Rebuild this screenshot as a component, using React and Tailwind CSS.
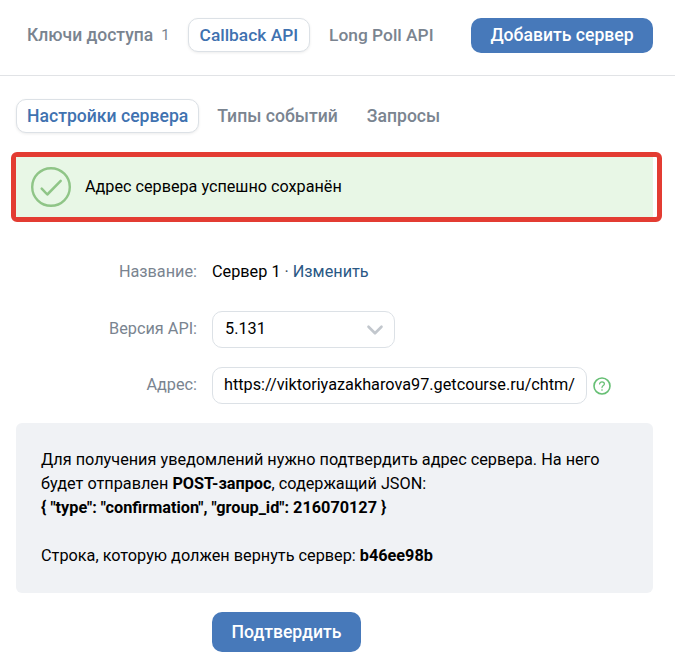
import { ChevronDown } from "lucide-react";

const CheckCircle = () => (
  <svg width="40" height="40" viewBox="0 0 40 40" fill="none" className="shrink-0">
    <circle cx="20" cy="20" r="18.8" stroke="#8fc587" strokeWidth="2.4" />
    <path d="M10.7 21.7 L16.3 27.5 L29.7 13.9" stroke="#8fc587" strokeWidth="2.5" strokeLinecap="round" strokeLinejoin="round" />
  </svg>
);

const HelpIcon = () => (
  <svg width="18" height="18" viewBox="0 0 18 18" fill="none" className="shrink-0">
    <circle cx="9" cy="9" r="8" stroke="#66bf74" strokeWidth="1.6" />
    <path d="M6.6 7 C6.6 5.6 7.7 4.8 9 4.8 C10.3 4.8 11.4 5.6 11.4 6.9 C11.4 8.5 9 8.6 9 10.6" stroke="#66bf74" strokeWidth="1.2" strokeLinecap="round" />
    <circle cx="9" cy="13" r="0.8" fill="#66bf74" />
  </svg>
);

const Label = ({ children }) => (
  <div className="w-[197px] mr-[15px] shrink-0 text-right text-[#7a8490]">{children}</div>
);

export default function App() {
  return (
    <div className="w-[675px] h-[671px] overflow-hidden bg-white text-[16.25px] text-black font-['Roboto',sans-serif]">
      <div className="h-[76px] border-b border-[#e1e3e6] pt-[18px] pl-[16px] pr-[22px] flex items-start">
        <div className="h-[34px] flex items-center px-[11px] text-[17.5px] font-medium text-[#7a8490]">
          Ключи доступа
          <span className="ml-[8px] text-[15px] font-normal">1</span>
        </div>
        <div className="ml-[7px] h-[34px] flex items-center px-[11px] text-[17.35px] font-medium text-[#3f72b0] bg-white border border-[#dce1e6] rounded-[10px] shadow-[0_1px_3px_rgba(0,0,0,0.08)]">
          Callback API
        </div>
        <div className="ml-[8px] h-[34px] flex items-center px-[11px] text-[17.35px] font-medium text-[#7a8490]">
          Long Poll API
        </div>
        <button className="ml-auto w-[182px] h-[35px] rounded-[10px] bg-[#4779ba] text-white text-[17.6px] font-medium">
          Добавить сервер
        </button>
      </div>

      <div className="pt-[23px] pl-[16px] flex items-center">
        <div className="h-[34px] flex items-center px-[10px] text-[17.6px] font-medium text-[#3f72b0] bg-white border border-[#dce1e6] rounded-[10px] shadow-[0_1px_3px_rgba(0,0,0,0.08)]">
          Настройки сервера
        </div>
        <div className="ml-[8px] h-[34px] flex items-center px-[10px] text-[17.6px] font-medium text-[#7a8490]">
          Типы событий
        </div>
        <div className="ml-[9px] h-[34px] flex items-center px-[10px] text-[17.6px] font-medium text-[#7a8490]">
          Запросы
        </div>
      </div>

      <div className="mt-[19px] ml-[11px] w-[651px] h-[70px] border-[5px] border-[#e33c32] rounded-[6px] bg-white">
        <div className="mr-[4px] h-full bg-[#e8f7e6] flex items-center pl-[15px]">
          <CheckCircle />
          <span className="ml-[14px] text-[16.2px]">Адрес сервера успешно сохранён</span>
        </div>
      </div>

      <div className="mt-[39px] flex items-center h-[22px]">
        <Label>Название:</Label>
        <span>Сервер 1</span>
        <span className="ml-[4px] text-[#3a4a5a]">·</span>
        <span className="ml-[4px] text-[#2a5885]">Изменить</span>
      </div>

      <div className="mt-[28px] flex items-center">
        <Label>Версия API:</Label>
        <div className="w-[183px] h-[37px] border border-[#dce1e6] rounded-[10px] flex items-center justify-between pl-[12px] pr-[6px]">
          <span>5.131</span>
          <ChevronDown size={26} strokeWidth={2.4} className="text-[#c2c7cd]" />
        </div>
      </div>

      <div className="mt-[19px] flex items-center">
        <Label>Адрес:</Label>
        <div className="w-[375px] h-[37px] border border-[#dce1e6] rounded-[10px] flex items-center pl-[11px] whitespace-nowrap overflow-hidden">
          https://viktoriyazakharova97.getcourse.ru/chtm/
        </div>
        <div className="ml-[6px]">
          <HelpIcon />
        </div>
      </div>

      <div className="mt-[19px] ml-[16px] w-[637px] h-[170px] rounded-[6px] bg-[#f0f2f5] pt-[25px] pl-[25px] pr-[20px] leading-[24px]">
        <p>
          Для получения уведомлений нужно подтвердить адрес сервера. На него
          <br />
          будет отправлен <b className="font-bold">POST-запрос</b>, содержащий JSON:
          <br />
          <b className="font-bold">{'{ "type": "confirmation", "group_id": 216070127 }'}</b>
        </p>
        <p className="mt-[24px]">
          Строка, которую должен вернуть сервер: <b className="font-bold">b46ee98b</b>
        </p>
      </div>

      <div className="mt-[19px] ml-[212px]">
        <button className="w-[149px] h-[40px] rounded-[10px] bg-[#4779ba] text-white text-[17.6px] font-medium">
          Подтвердить
        </button>
      </div>
    </div>
  );
}
